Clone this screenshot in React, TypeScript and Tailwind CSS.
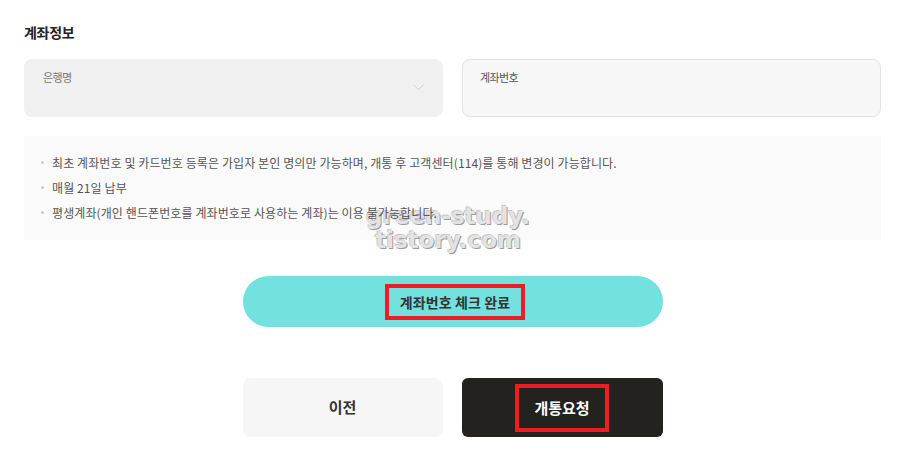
import React from "react";

export default function App() {
  const notes = [
    "최초 계좌번호 및 카드번호 등록은 가입자 본인 명의만 가능하며, 개통 후 고객센터(114)를 통해 변경이 가능합니다.",
    "매월 21일 납부",
    "평생계좌(개인 핸드폰번호를 계좌번호로 사용하는 계좌)는 이용 불가능합니다.",
  ];
  return (
    <div
      className="relative w-[900px] h-[454px] bg-white overflow-hidden"
      style={{ fontFamily: '"Noto Sans CJK KR", "Noto Sans", sans-serif' }}
    >
      <div className="w-[857px] ml-[24px] pt-[22px] flex flex-col">
        <h2 className="text-[14px] leading-[20px] font-bold text-[#222] tracking-[-0.3px]">계좌정보</h2>

        <div className="mt-[17px] flex gap-[19px]">
          <div className="relative w-[419px] h-[58px] rounded-[8px] bg-[#f0f0f0] pl-[19px] pt-[4px]">
            <span className="text-[11px] leading-[16px] text-[#777] tracking-[-0.6px]">은행명</span>
            <svg
              className="absolute right-[19px] top-[25px]"
              width="11"
              height="7"
              viewBox="0 0 11 7"
              fill="none"
            >
              <path d="M0.5 0.8 L5.5 5.6 L10.5 0.8" stroke="#cfcfcf" strokeWidth="1" />
            </svg>
          </div>
          <div className="w-[419px] h-[58px] rounded-[8px] bg-[#f7f7f7] border border-[#e4e4e4] pl-[17px] pt-[3px]">
            <span className="text-[11px] leading-[16px] text-[#555] tracking-[-0.6px]">계좌번호</span>
          </div>
        </div>

        <div className="mt-[19px] h-[104px] bg-[#fafafa] pl-[17px] pt-[14px]">
          {notes.map((n) => (
            <div key={n} className="flex items-center h-[25px]">
              <span className="w-[3px] h-[3px] rounded-full bg-[#cccccc] mr-[8px]" />
              <span className="relative z-10 text-[12px] text-[#555] tracking-[0.1px]">{n}</span>
            </div>
          ))}
        </div>

        <div className="mt-[36px] flex justify-center">
          <button className="w-[420px] h-[51px] rounded-full bg-[#73e2de] flex items-center justify-center">
            <span className="ml-[5px] border-[4px] border-[#ee1c25] px-[11px] py-[4px] text-[14px] leading-[20px] font-bold text-[#333] tracking-[0.1px]">
              계좌번호 체크 완료
            </span>
          </button>
        </div>

        <div className="mt-[51px] flex justify-center gap-[19px]">
          <button className="w-[200px] h-[59px] rounded-[8px] bg-[#f6f6f6] flex items-center justify-center text-[15px] font-bold text-[#333]">
            이전
          </button>
          <button className="w-[201px] h-[59px] rounded-[6px] bg-[#23221e] flex items-center justify-center">
            <span className="border-[4px] border-[#ee1c25] px-[15px] py-[9px] text-[15px] leading-[22px] font-bold text-white">
              개통요청
            </span>
          </button>
        </div>
      </div>

      <div
        className="absolute z-0 left-[366px] top-[204px] pointer-events-none flex flex-col items-center text-[23px] leading-[24px] font-bold text-[#e3e3e3] [text-shadow:1px_1px_0_#9a9a9a,-1px_-1px_0_#c8c8c8]"
        style={{ fontFamily: '"DejaVu Sans", sans-serif' }}
      >
        <span>green-study.</span>
        <span>tistory.com</span>
      </div>
    </div>
  );
}
